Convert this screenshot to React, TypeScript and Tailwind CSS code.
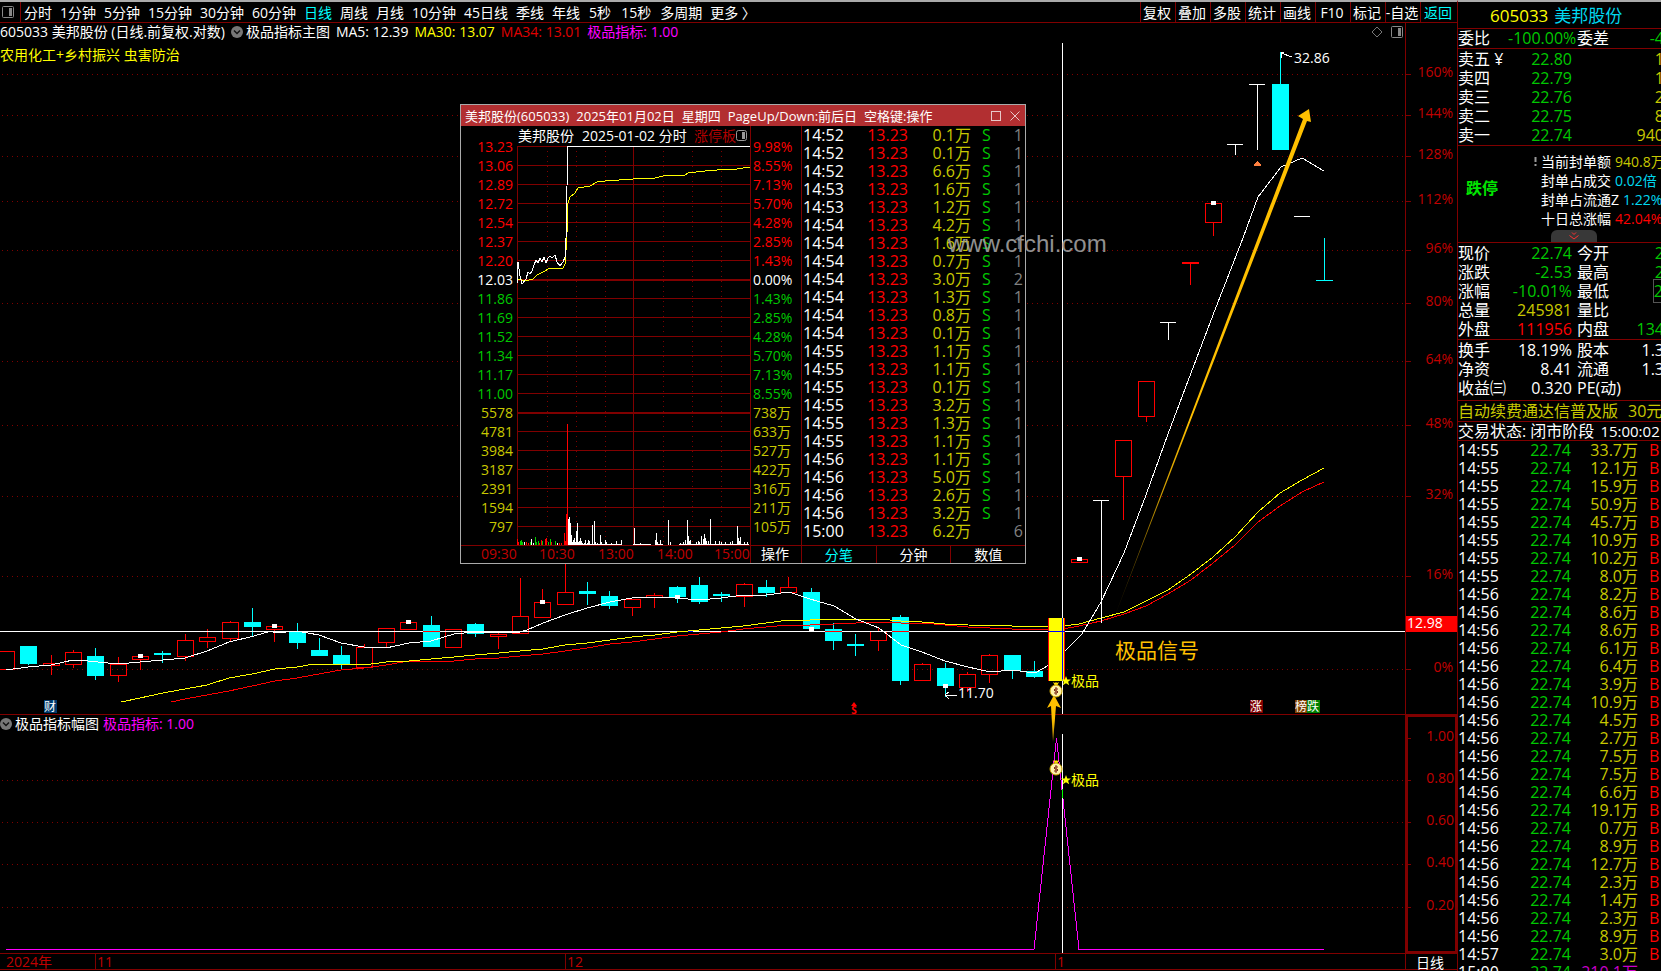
import clsx from "clsx";

const periods = [
  "分时",
  "1分钟",
  "5分钟",
  "15分钟",
  "30分钟",
  "60分钟",
  "日线",
  "周线",
  "月线",
  "10分钟",
  "45日线",
  "季线",
  "年线",
  "5秒",
  "15秒",
  "多周期",
  "更多 〉",
];

const tools = ["复权", "叠加", "多股", "统计", "画线", "F10", "标记", "-自选", "返回"];

type Kind = "up" | "down";
// kind, body top, body bottom, high, low, marked
type Candle = [Kind, number, number, number, number, boolean?];

const STEP = 22.35;
const xAt = (i: number) => Math.round(6 + STEP * i);

const candles: Candle[] = [
  ["up", 651, 669, 651, 669],
  ["down", 646, 664, 646, 665],
  ["up", 663, 665, 655, 675],
  ["up", 652, 664, 650, 668],
  ["down", 656, 676, 648, 680],
  ["up", 664, 675, 657, 682],
  ["up", 656, 659, 656, 670, true],
  ["down", 653, 655, 651, 663],
  ["up", 640, 656, 634, 661],
  ["up", 637, 641, 629, 648],
  ["up", 622, 638, 621, 642],
  ["down", 622, 627, 608, 636],
  ["up", 626, 629, 626, 642, true],
  ["down", 632, 643, 623, 649],
  ["down", 650, 656, 638, 656],
  ["down", 655, 664, 646, 670],
  ["up", 647, 667, 644, 667],
  ["up", 628, 642, 628, 648],
  ["up", 622, 629, 622, 629, true],
  ["down", 625, 647, 616, 647],
  ["up", 629, 647, 629, 647],
  ["down", 624, 634, 623, 637],
  ["up", 634, 636, 632, 649],
  ["up", 616, 633, 578, 633],
  ["up", 602, 617, 589, 617, true],
  ["up", 592, 604, 564, 604],
  ["down", 591, 594, 582, 605],
  ["down", 596, 606, 591, 609],
  ["up", 599, 607, 599, 616],
  ["up", 595, 597, 593, 608],
  ["down", 587, 597, 586, 603, true],
  ["down", 585, 602, 577, 604],
  ["down", 594, 596, 592, 602],
  ["up", 584, 596, 583, 607],
  ["down", 587, 593, 580, 597],
  ["up", 587, 592, 577, 592],
  ["down", 592, 629, 588, 629, true],
  ["down", 629, 641, 623, 650],
  ["down", 644, 646, 634, 656],
  ["up", 631, 640, 628, 651],
  ["down", 617, 681, 615, 685],
  ["up", 664, 680, 663, 680],
  ["down", 668, 686, 663, 697, true],
  ["up", 674, 687, 672, 692],
  ["up", 655, 674, 654, 683],
  ["down", 655, 671, 655, 679],
  ["down", 671, 677, 661, 678],
];

const ma5 =
  "6,670 28,667 51,665 73,660 88,661 118,664 140,662 163,660 185,658 207,651 229,642 250,637 268,632 275,631 297,631 319,635 341,643 364,647 386,648 409,643 431,641 454,634 475,632 499,633 520,632 527,630 543,623 565,615 587,608 610,602 632,598 655,597 677,598 699,600 721,598 743,595 766,595 789,592 810,599 834,606 856,619 879,628 901,645 922,652 945,661 968,667 990,672 1012,670 1035,673 1049,665 1065,651 1082,634 1101,602 1124,553 1146,495 1168,434 1191,373 1213,315 1236,256 1243,238 1258,197 1281,167 1302,158 1324,171";
const ma30 =
  "121,702 140,698 163,693 185,689 207,685 229,678 252,674 275,669 297,667 314,664 341,664 364,665 386,662 409,661 431,659 454,657 475,655 499,653 520,651 543,649 565,645 587,643 610,640 632,637 655,635 677,632 699,630 721,628 743,626 766,623 789,620 810,620 834,619 879,619 901,621 922,622 945,624 968,625 1012,626 1063,626 1079,624 1101,618 1124,612 1146,601 1168,590 1191,574 1213,557 1235,537 1258,512 1280,493 1302,480 1324,468";
const ma34 =
  "171,702 185,699 207,695 229,691 252,686 275,681 297,678 319,674 341,670 364,668 386,665 409,661 454,661 475,659 499,658 520,656 543,654 565,651 587,648 610,644 632,642 655,639 677,636 699,634 721,632 743,629 766,627 789,625 810,625 834,624 856,623 879,622 901,623 922,623 945,625 968,627 990,628 1012,629 1063,629 1079,626 1101,621 1124,614 1146,606 1168,594 1191,580 1213,563 1235,545 1258,522 1280,506 1302,492 1324,482";

const percentAxis: [string, number][] = [
  ["160%", 74],
  ["144%", 115],
  ["128%", 156],
  ["112%", 201],
  ["96%", 250],
  ["80%", 303],
  ["64%", 361],
  ["48%", 425],
  ["32%", 496],
  ["16%", 576],
  ["0%", 669],
];

const indicatorAxis: [string, number][] = [
  ["1.00", 738],
  ["0.80", 780],
  ["0.60", 822],
  ["0.40", 864],
  ["0.20", 907],
];

const priceLabels = [
  ["13.23", "9.98%"],
  ["13.06", "8.55%"],
  ["12.89", "7.13%"],
  ["12.72", "5.70%"],
  ["12.54", "4.28%"],
  ["12.37", "2.85%"],
  ["12.20", "1.43%"],
  ["12.03", "0.00%"],
  ["11.86", "1.43%"],
  ["11.69", "2.85%"],
  ["11.52", "4.28%"],
  ["11.34", "5.70%"],
  ["11.17", "7.13%"],
  ["11.00", "8.55%"],
  ["5578", "738万"],
  ["4781", "633万"],
  ["3984", "527万"],
  ["3187", "422万"],
  ["2391", "316万"],
  ["1594", "211万"],
  ["797", "105万"],
];

const dayTicks = [
  ["14:52", "0.1万", "1"],
  ["14:52", "0.1万", "1"],
  ["14:52", "6.6万", "1"],
  ["14:53", "1.6万", "1"],
  ["14:53", "1.2万", "1"],
  ["14:54", "4.2万", "1"],
  ["14:54", "1.6万", "1"],
  ["14:54", "0.7万", "1"],
  ["14:54", "3.0万", "2"],
  ["14:54", "1.3万", "1"],
  ["14:54", "0.8万", "1"],
  ["14:54", "0.1万", "1"],
  ["14:55", "1.1万", "1"],
  ["14:55", "1.1万", "1"],
  ["14:55", "0.1万", "1"],
  ["14:55", "3.2万", "1"],
  ["14:55", "1.3万", "1"],
  ["14:55", "1.1万", "1"],
  ["14:56", "1.1万", "1"],
  ["14:56", "5.0万", "1"],
  ["14:56", "2.6万", "1"],
  ["14:56", "3.2万", "1"],
  ["15:00", "6.2万", "6"],
];

const liveTicks = [
  ["14:55", "33.7万"],
  ["14:55", "12.1万"],
  ["14:55", "15.9万"],
  ["14:55", "50.9万"],
  ["14:55", "45.7万"],
  ["14:55", "10.9万"],
  ["14:55", "10.2万"],
  ["14:55", "8.0万"],
  ["14:56", "8.2万"],
  ["14:56", "8.6万"],
  ["14:56", "8.6万"],
  ["14:56", "6.1万"],
  ["14:56", "6.4万"],
  ["14:56", "3.9万"],
  ["14:56", "10.9万"],
  ["14:56", "4.5万"],
  ["14:56", "2.7万"],
  ["14:56", "7.5万"],
  ["14:56", "7.5万"],
  ["14:56", "6.6万"],
  ["14:56", "19.1万"],
  ["14:56", "0.7万"],
  ["14:56", "8.9万"],
  ["14:56", "12.7万"],
  ["14:56", "2.3万"],
  ["14:56", "1.4万"],
  ["14:56", "2.3万"],
  ["14:56", "8.9万"],
  ["14:57", "3.0万"],
  ["15:00", "210.1万"],
];

// x, height, colour of the per-minute volume bars
const volumes: [number, number, string][] = [
  [57, 6, "#f00"], [58, 3, "#f00"], [60, 4, "#0c0"], [61, 5, "#0c0"], [62, 3, "#0c0"], [64, 3, "#fff"],
  [66, 3, "#f00"], [68, 2, "#f00"], [70, 3, "#0c0"], [71, 6, "#fff"], [73, 2, "#fff"], [75, 8, "#0c0"],
  [76, 3, "#0c0"], [78, 4, "#0c0"], [79, 2, "#f00"], [81, 5, "#f00"], [82, 4, "#0c0"], [85, 6, "#f00"],
  [86, 7, "#f00"], [88, 3, "#0c0"], [90, 6, "#0c0"], [91, 3, "#f00"], [95, 4, "#0c0"], [97, 2, "#fff"],
  [99, 2, "#f00"], [101, 2, "#f00"], [104, 12, "#f00"], [105, 4, "#f00"], [106, 31, "#f00"],
  [107, 121, "#f00"], [108, 26, "#fff"], [109, 28, "#fff"], [110, 22, "#fff"], [111, 10, "#fff"],
  [112, 3, "#fff"], [113, 5, "#fff"], [114, 7, "#fff"], [115, 3, "#fff"], [116, 14, "#fff"],
  [117, 22, "#fff"], [118, 3, "#fff"], [119, 4, "#fff"], [120, 7, "#fff"], [121, 4, "#fff"],
  [122, 2, "#fff"], [124, 2, "#fff"], [125, 5, "#fff"], [127, 2, "#fff"], [128, 5, "#fff"],
  [129, 4, "#fff"], [132, 20, "#fff"], [134, 24, "#fff"], [135, 3, "#fff"], [137, 2, "#fff"],
  [140, 10, "#fff"], [141, 3, "#fff"], [145, 5, "#fff"], [146, 3, "#fff"], [151, 2, "#fff"],
  [156, 4, "#fff"], [161, 5, "#fff"], [174, 17, "#fff"], [180, 2, "#fff"], [195, 5, "#fff"],
  [196, 12, "#fff"], [197, 3, "#fff"], [200, 5, "#fff"], [208, 25, "#fff"], [210, 3, "#fff"],
  [220, 2, "#fff"], [223, 3, "#fff"], [225, 5, "#fff"], [227, 25, "#fff"], [228, 9, "#fff"],
  [229, 4, "#fff"], [230, 5, "#fff"], [236, 3, "#fff"], [238, 4, "#fff"], [239, 3, "#fff"],
  [241, 9, "#fff"], [243, 6, "#fff"], [244, 11, "#fff"], [245, 7, "#fff"], [246, 4, "#fff"],
  [248, 4, "#fff"], [250, 26, "#fff"], [255, 4, "#fff"], [259, 4, "#fff"], [261, 3, "#fff"],
  [265, 3, "#fff"], [270, 3, "#fff"], [272, 4, "#fff"], [277, 19, "#fff"], [278, 7, "#fff"],
  [279, 4, "#fff"], [280, 8, "#fff"], [284, 3, "#fff"], [287, 3, "#fff"],
];

const PaneIcon = () => (
  <svg width="12" height="12" viewBox="0 0 12 12" className="shrink-0">
    <rect x="0.5" y="0.5" width="11" height="11" rx="1" fill="none" stroke="#888" />
    <rect x="7" y="2" width="3" height="8" fill="#888" />
  </svg>
);

const ChevronIcon = () => (
  <svg width="12" height="12" viewBox="0 0 12 12" className="shrink-0">
    <circle cx="6" cy="6" r="6" fill="#777" />
    <path d="M3 4.5 6 7.5 9 4.5" fill="none" stroke="#111" strokeWidth="1.5" />
  </svg>
);

const Toolbar = () => (
  <header className="flex h-[23px] shrink-0 items-stretch border-b border-b-[#800000] border-t-2 border-t-[#aaa] text-sm leading-5">
    <div className="flex w-[21px] shrink-0 items-center border-r border-[#800000] pl-0.5">
      <PaneIcon />
    </div>
    <nav className="flex flex-1 items-center gap-2 overflow-hidden pl-[3px] pt-px">
      {periods.map((el) => (
        <button
          key={el}
          className={clsx(
            "shrink-0 cursor-pointer",
            el === "日线" && "text-[#00ffff]",
            el.endsWith("秒") && "px-px",
          )}
        >
          {el}
        </button>
      ))}
    </nav>
    <div className="flex shrink-0">
      {tools.map((el) => (
        <button
          key={el}
          className={clsx(
            "flex cursor-pointer items-center justify-center whitespace-nowrap border-l border-[#800000] pr-0.5 pt-px",
            el === "返回" ? "w-[37px] text-[#00ffff]" : "w-[35px]",
          )}
        >
          {el}
        </button>
      ))}
    </div>
  </header>
);

const MoneyBag = ({ x, y }: { x: number; y: number }) => (
  <g>
    <path d={`M${x - 3} ${y} l2 1 1 -1 1 1 2 -1 -2 4 h-2 Z`} fill="#ffe000" />
    <ellipse cx={x} cy={y + 9} rx="6" ry="6" fill="#fff2a8" stroke="#c9a400" />
    <path
      d={`M${x + 2} ${y + 7} h-3 q-2 1 0 2 h2 q2 1 0 2 h-3 M${x} ${y + 5} v8`}
      fill="none"
      stroke="#7a2a1a"
    />
  </g>
);

const Signal = ({ y }: { y: number }) => (
  <g fill="#ffff00">
    <path
      transform={`translate(1066 ${y})`}
      d="M0 -5 1.3 -1.6 5 -1.5 2.1 0.7 3.2 4.3 0 2.2 -3.2 4.3 -2.1 0.7 -5 -1.5 -1.3 -1.6Z"
    />
    <text x="1071" y={y + 5} fontSize="14">
      极品
    </text>
  </g>
);

const Badge = ({ x, fill, label }: { x: number; fill: string; label: string }) => (
  <g>
    <rect x={x} y="700" width="13" height="13" fill={fill} />
    <text x={x + 6} y="711" fontSize="12" textAnchor="middle" fill="#fff">
      {label}
    </text>
  </g>
);

const CandleShape = ({ i, candle }: { i: number; candle: Candle }) => {
  const [kind, top, bottom, high, low, marked] = candle;
  const x = xAt(i);
  const up = kind === "up";
  const color = up ? "#ff0000" : "#00ffff";
  return (
    <g>
      {high < top && <rect x={x} y={high} width="1" height={top - high} fill={color} />}
      {low > bottom && <rect x={x} y={bottom} width="1" height={low - bottom} fill={color} />}
      {up ? (
        <rect x={x - 7.5} y={top + 0.5} width="16" height={bottom - top} fill="none" stroke={color} />
      ) : (
        <rect x={x - 8} y={top} width="17" height={bottom - top} fill={color} />
      )}
      {marked && <rect x={x - 2} y={top + (up ? -2 : bottom - top - 2)} width="5" height="4" fill="#fff" />}
    </g>
  );
};

const MainChart = () => (
  <svg viewBox="0 23 1457 692" className="block w-full overflow-visible">
    <defs>
      <linearGradient id="rise" x1="0" y1="1" x2="0" y2="0">
        <stop offset="0" stopColor="#ffc000" stopOpacity="0" />
        <stop offset="0.25" stopColor="#ffc000" stopOpacity="0.8" />
        <stop offset="0.4" stopColor="#ffc000" />
      </linearGradient>
      <linearGradient id="lift" x1="0" y1="1" x2="0" y2="0">
        <stop offset="0" stopColor="#ffc000" stopOpacity="0.2" />
        <stop offset="0.5" stopColor="#ffc000" />
      </linearGradient>
    </defs>

    <g shapeRendering="crispEdges" fill="none">
      {percentAxis.map(([label, y]) => (
        <g key={label} stroke="#800000">
          <path d={`M2 ${y + 0.5}H1405`} strokeDasharray="1 4" />
          <path d={`M1405 ${y + 0.5}H1411`} />
        </g>
      ))}
      <path d="M1405.5 23V715M0 714.5H1457" stroke="#800000" />

      {candles.map((candle, i) => (
        <CandleShape key={i} i={i} candle={candle} />
      ))}

      <path d="M0 631.5H1405" stroke="#fff" />
      <path d="M273 631.5H286" stroke="#fff" strokeWidth="2" />
      <path d="M682 631.5H693" stroke="#0000ff" />
      <path d="M423 631.5H440M825 631.5H842M892 631.5H909" stroke="#ff0000" />

      <polyline points={ma34} stroke="#ff0000" />
      <polyline points={ma30} stroke="#ffff00" />
      <polyline points={ma5} stroke="#fff" />

      <rect x="1048" y="618" width="17" height="63" fill="#ffff00" />
      <path d="M1048.5 618V681M1064.5 618V681" stroke="#ff0000" />
      <path d="M1062.5 43V618M1062.5 681V714" stroke="#fff" />
      <path d="M1062.5 618V681M1048 631.5H1065" stroke="#0000ff" />

      <rect x="1071.5" y="559.5" width="16" height="3" stroke="#ff0000" />
      <rect x="1077" y="557" width="5" height="4" fill="#fff" />
      <path d="M1093 500.5H1109M1101.5 500V623" stroke="#fff" />
      <path d="M1115.5 440.5H1131.5V476.5H1115.5ZM1123.5 477V520" stroke="#ff0000" />
      <path d="M1138.5 381.5H1154.5V416.5H1138.5ZM1146.5 417V422" stroke="#ff0000" />
      <path d="M1160 322.5H1176M1168.5 322V340" stroke="#fff" />
      <path d="M1190.5 263V285" stroke="#ff0000" />
      <path d="M1182 263H1199" stroke="#ff0000" strokeWidth="2" />
      <path d="M1205.5 203.5H1221.5V222.5H1205.5ZM1213.5 223V236" stroke="#ff0000" />
      <rect x="1211" y="201" width="5" height="4" fill="#fff" />
      <path d="M1227 144.5H1243M1235.5 144V155" stroke="#fff" />
      <path d="M1249 84.5H1265M1257.5 84V150" stroke="#fff" />
      <path d="M1272 84H1289V150H1272ZM1280 52H1281V84H1280Z" fill="#00ffff" />
      <path d="M1294 216.5H1310" stroke="#fff" />
      <path d="M1316 280.5H1333M1324.5 238V280" stroke="#00ffff" />
      <path d="M1281 58V52.5H1284M1281 53L1292 57M945 695.5H957M945 695L949 692M945 695L949 699" stroke="#fff" />
      <path d="M1254 166V164L1257 161 1261 164V166Z" fill="#ff8040" />
    </g>

    <path d="M1111 626 1303 119 1298 116 1309 109 1311 122 1307 121Z" fill="url(#rise)" />
    <path d="M1053 742 1051 706 1047 708 1054 695 1061 708 1056 706Z" fill="url(#lift)" />
    <MoneyBag x={1056} y={682} />
    <Signal y={681} />

    <text x="1294" y="63" fontSize="14" fill="#fff">32.86</text>
    <text x="958" y="698" fontSize="14" fill="#fff">11.70</text>
    <text x="1115" y="658" fontSize="21" fill="#ffc000">极品信号</text>
    <path d="M851 706 854 702 857 706Z" fill="#ff0000" />
    <text x="854" y="714" fontSize="10" fontWeight="700" textAnchor="middle" fill="#ff0000">S</text>

    <Badge x={44} fill="#003a6e" label="财" />
    <Badge x={1250} fill="#800000" label="涨" />
    <Badge x={1295} fill="#804000" label="榜" />
    <Badge x={1307} fill="#008000" label="跌" />

    {percentAxis.map(([label, y]) => (
      <text key={label} x="1453" y={y + 3} fontSize="14" textAnchor="end" fill="#c00000">
        {label}
      </text>
    ))}
    <rect x="1406" y="616" width="51" height="16" fill="#ff0000" />
    <text x="1407" y="628" fontSize="14" fill="#fff">12.98</text>
  </svg>
);

const IndicatorChart = () => (
  <svg viewBox="0 715 1457 256" className="block w-full">
    <g shapeRendering="crispEdges" fill="none" stroke="#800000">
      {indicatorAxis.map(([label, y], i) => (
        <g key={label}>
          {i > 0 && <path d={`M2 ${y + 0.5}H1405`} strokeDasharray="1 4" />}
          <path d={`M1405 ${y + 0.5}H1411M1405 ${y - 20.5}H1408`} />
        </g>
      ))}
      <path d="M1405.5 715V969M0 953.5H1457M0 969.5H1457" />
      <path d="M1407 716H1456V952H1407Z" strokeWidth="2" />
      <path d="M95.5 953V969M565.5 953V969M1055.5 953V969" />
      <polyline points="6,949.5 1034,949.5 1056.5,738 1079,949.5 1324,949.5" stroke="#ff00ff" />
      <path d="M1062.5 734V953" stroke="#fff" />
      <path d="M1062.5 789V798" stroke="#00ff00" />
    </g>
    <MoneyBag x={1056} y={760} />
    <Signal y={780} />
    <path d="M1053 742 1052 715H1055Z" fill="#ffc000" fillOpacity="0.6" />
    {indicatorAxis.map(([label, y]) => (
      <text key={label} x="1454" y={y + 3} fontSize="14" textAnchor="end" fill="#c00000">
        {label}
      </text>
    ))}
    <g fontSize="14" fill="#c00000">
      <text x="6" y="967">2024年</text>
      <text x="97" y="967">11</text>
      <text x="567" y="967">12</text>
      <text x="1057" y="967">1</text>
      <text x="1430" y="968" textAnchor="middle" fill="#fff">日线</text>
    </g>
  </svg>
);

const labelColor = (i: number) => {
  if (i < 7) return "#ff0000";
  if (i === 7) return "#ffffff";
  return i < 14 ? "#00c800" : "#c8c800";
};

const IntradayChart = () => (
  <svg width="341" height="437" viewBox="0 0 341 437" className="block shrink-0" fontSize="14">
    <g shapeRendering="crispEdges" fill="none" stroke="#800000">
      {priceLabels.map((_, i) => (
        <path key={i} d={`M56 ${20.5 + 19 * i}H290`} strokeWidth={i === 7 || i === 14 ? 2 : 1} />
      ))}
      <path d="M56.5 20V419M172.5 20V419M289.5 0V437M340.5 0V437M0 419.5H341" />
      <path d="M86.5 20V419M115.5 20V419M144.5 20V419M202.5 20V419M231.5 20V419M260.5 20V419" strokeDasharray="1 4" />
      {volumes.map(([x, h, fill]) => (
        <rect key={x} x={x - 1} y={419 - h} width="1" height={h} fill={fill} stroke="none" />
      ))}
      <path d="M112 418.5H160M172 418.5H190M196 418.5H202M218 418.5H288" stroke="#fff" />
      <polyline
        points="56,154 59,153 62,155 68,154 72,153 76,149 82,146 89,142 102,142 104,138 105,124 106,107 107,77 109,71 114,67 117,62 129,60 136,56 144,55 172,53 194,52 202,50 224,49 227,47 244,45 256,44 276,43 289,41"
        stroke="#ffff00"
      />
      <polyline
        points="56,158 57,136 59,150 61,158 65,153 67,146 69,148 71,145 73,139 75,134 77,137 79,132 81,136 83,131 85,137 87,132 89,130 91,132 94,129 96,136 99,140 102,136 104,131 105,112 106,60 107,20.5 289,20.5"
        stroke="#fff"
      />
    </g>
    {priceLabels.map(([left, right], i) => (
      <g key={i} fill={labelColor(i)}>
        <text x="52" y={26 + 19 * i} textAnchor="end">{left}</text>
        <text x="292" y={26 + 19 * i}>{right}</text>
      </g>
    ))}
    <text x="57" y="15" fill="#fff">美邦股份</text>
    <text x="121" y="15" fill="#fff">2025-01-02 分时</text>
    <text x="233" y="15" fill="#b00000">涨停板</text>
    <rect x="275.5" y="4.5" width="10" height="10" rx="2" fill="#000" stroke="#999" />
    <rect x="281" y="6" width="3" height="7" fill="#999" />
    <g fill="#c00000">
      <text x="20" y="433">09:30</text>
      <text x="78" y="433">10:30</text>
      <text x="137" y="433">13:00</text>
      <text x="196" y="433">14:00</text>
      <text x="253" y="433">15:00</text>
    </g>
    <text x="300" y="433" fill="#fff">操作</text>
  </svg>
);

const DayWindow = () => (
  <section className="absolute left-[460px] top-[81px] flex w-[566px] flex-col border border-[#aaa] bg-black">
    <div className="flex h-[21px] items-center justify-between bg-[#b22f31] px-1 text-[13px] leading-5">
      <h2 className="flex gap-[7px] whitespace-nowrap">
        <span>美邦股份(605033)</span>
        <span>2025年01月02日</span>
        <span>星期四</span>
        <span>PageUp/Down:前后日</span>
        <span>空格键:操作</span>
      </h2>
      <div className="flex items-center gap-2">
        <button aria-label="最大化" className="size-[10px] border border-[#e8c8c8]" />
        <button aria-label="关闭" className="cursor-pointer">
          <svg width="12" height="12" viewBox="0 0 12 12">
            <path d="M1.5 1.5 10.5 10.5M10.5 1.5 1.5 10.5" stroke="#e8c8c8" />
          </svg>
        </button>
      </div>
    </div>
    <div className="flex">
      <IntradayChart />
      <div className="flex flex-1 flex-col justify-between">
        <table className="w-full table-fixed text-base leading-[18px]">
          <tbody>
            {dayTicks.map(([time, volume, count], i) => (
              <tr key={i} className="h-[18px]">
                <td className="w-[50px] p-0 pl-px">{time}</td>
                <td className="w-[56px] p-0 text-right text-[#ff0000]">13.23</td>
                <td className="w-[63px] p-0 text-right text-[#c8c800]">{volume}</td>
                <td className="p-0 pl-[11px] text-[#00c800]">{i < 22 ? "S" : ""}</td>
                <td className="w-5 p-0 pr-0.5 text-right text-[#808080]">{count}</td>
              </tr>
            ))}
          </tbody>
        </table>
        <div className="flex h-[18px] border-t border-[#800000] text-sm leading-[18px]">
          <button className="flex-1 text-[#00ffff]">分笔</button>
          <button className="flex-1 border-l border-[#800000]">分钟</button>
          <button className="flex-1 border-l border-[#800000]">数值</button>
        </div>
      </div>
    </div>
  </section>
);

interface QuoteProps {
  label: string;
  value: string;
  color?: string;
  label2?: string;
  value2?: string;
  color2?: string;
  boxed?: boolean;
}

const Quote = ({ label, value, color, label2, value2, color2, boxed }: QuoteProps) => (
  <div className="flex h-[19px] items-center whitespace-nowrap">
    <span className="w-[50px]">{label}</span>
    <span className={clsx("w-[64px] text-right", color)}>{value}</span>
    <span className="w-[54px] pl-[5px]">{label2}</span>
    <span className={clsx("flex-1 text-right", color2)}>
      <span className={clsx(boxed && "border border-[#555]")}>{value2}</span>
    </span>
  </div>
);

const green = "text-[#00c800]";
const yellow = "text-[#c8c800]";
const red = "text-[#ff0000]";

const QuotePanel = () => (
  <aside className="w-[204px] shrink-0 overflow-hidden border-l border-[#800000] border-t-2 border-t-[#aaa] text-base leading-[19px]">
    <div className="w-[206px] *:border-b *:border-[#800000]">
      <h1 className="flex h-[27px] items-center gap-1.5 text-[17px]">
        <span className="pl-8 text-[#ffff00]">605033</span>
        <span className="text-[#00d8f0]">美邦股份</span>
      </h1>
      <div className="h-5">
        <Quote label="委比" value="-100.00%" color={green} label2="委差" value2="-4" color2={green} />
      </div>
      <div className="h-[97px] pt-px">
        <Quote label="卖五 ¥" value="22.80" color={green} value2="1" color2={yellow} />
        <Quote label="卖四" value="22.79" color={green} value2="1" color2={yellow} />
        <Quote label="卖三" value="22.76" color={green} value2="2" color2={yellow} />
        <Quote label="卖二" value="22.75" color={green} value2="8" color2={yellow} />
        <Quote label="卖一" value="22.74" color={green} value2="940" color2={yellow} />
      </div>
      <div className="flex h-[97px] flex-col justify-between">
        <div className="flex items-center gap-9 whitespace-nowrap pl-2 pt-1.5">
          <strong className="shrink-0 pb-1 text-[#00e600]">跌停</strong>
          <div className="flex items-start gap-1 text-sm leading-[19px]">
            <svg width="3" height="19" viewBox="0 0 3 19">
              <path d="M1.500 5V10M1.500 12V14" stroke="#999" strokeWidth="2" />
            </svg>
            <dl className="flex flex-col *:flex *:gap-1">
              <div>
                <dt>当前封单额</dt>
                <dd className={yellow}>940.8万</dd>
              </div>
              <div>
                <dt>封单占成交</dt>
                <dd className="text-[#00d8f0]">0.02倍</dd>
              </div>
              <div>
                <dt>封单占流通Z</dt>
                <dd className="text-[#00d8f0]">1.22%</dd>
              </div>
              <div>
                <dt>十日总涨幅</dt>
                <dd className={red}>42.04%</dd>
              </div>
            </dl>
          </div>
        </div>
        <button
          aria-label="收起"
          className="ml-[93px] flex h-3 w-[46px] items-center justify-center rounded-t-md bg-[#383838]"
        >
          <svg width="10" height="8" viewBox="0 0 10 8" fill="none" stroke="#ff3030">
            <path d="M3 0.5 5 2.500 7 0.500M0.500 3.500 5 7 9.500 3.500" />
          </svg>
        </button>
      </div>
      <div className="h-[97px] pt-px">
        <Quote label="现价" value="22.74" color={green} label2="今开" value2="2" color2={green} />
        <Quote label="涨跌" value="-2.53" color={green} label2="最高" value2="2" color2={green} />
        <Quote label="涨幅" value="-10.01%" color={green} label2="最低" value2="2" color2={green} boxed />
        <Quote label="总量" value="245981" color={yellow} label2="量比" />
        <Quote label="外盘" value="111956" color={red} label2="内盘" value2="134" color2={green} />
      </div>
      <div className="h-[61px] pt-px">
        <Quote label="换手" value="18.19%" label2="股本" value2="1.3" />
        <Quote label="净资" value="8.41" label2="流通" value2="1.3" />
        <Quote label="收益㈢" value="0.320" label2="PE(动)" />
      </div>
      <p className="flex h-[21px] items-center gap-2.5 whitespace-nowrap text-[#c8c800]">
        <span>自动续费通达信普及版</span>
        <span>30元</span>
      </p>
      <p className="flex h-[19px] items-center gap-1.5 whitespace-nowrap">
        <span>交易状态: 闭市阶段</span>
        <span className="text-[15px]">15:00:02</span>
      </p>
    </div>
    <table className="w-[203px] table-fixed leading-[18px]">
      <tbody>
        {liveTicks.map(([time, volume], i) => {
          const last = i === liveTicks.length - 1;
          return (
            <tr key={i} className="h-[18px]">
              <td className="w-[50px] p-0">{time}</td>
              <td className="w-[63px] p-0 text-right text-[#00c800]">22.74</td>
              <td className={clsx("w-[67px] p-0 text-right", last ? "text-[#c800c8]" : "text-[#c8c800]")}>
                {volume}
              </td>
              <td className="p-0 pl-[11px] text-[#ff0000]">{last ? "" : "B"}</td>
            </tr>
          );
        })}
      </tbody>
    </table>
  </aside>
);

const App = () => {
  return (
    <div className="flex h-screen overflow-hidden bg-black font-['Open_Sans','Noto_Sans_CJK_SC',sans-serif] text-white">
      <main className="flex min-w-0 flex-1 flex-col">
        <Toolbar />
        <div className="relative">
          <MainChart />
          <div className="absolute left-0 top-0 whitespace-nowrap text-sm leading-[18px]">
            <div className="flex items-center gap-1.5">
              <span>605033 美邦股份 (日线.前复权.对数)</span>
              <div className="flex items-center gap-[3px]">
                <ChevronIcon />
                <span>极品指标主图</span>
              </div>
              <span>MA5: 12.39</span>
              <span className="text-[#ffff00]">MA30: 13.07</span>
              <span className="text-[#e00000]">MA34: 13.01</span>
              <span className="text-[#ff00ff]">极品指标: 1.00</span>
            </div>
            <p className="pt-[5px] text-[#ffff00]">农用化工+乡村振兴 虫害防治</p>
          </div>
          <div className="absolute right-[54px] top-[3px] flex items-center gap-2">
            <svg width="12" height="12" viewBox="0 0 12 12">
              <path d="M6 1 11 6 6 11 1 6Z" fill="none" stroke="#777" />
            </svg>
            <PaneIcon />
          </div>
          <DayWindow />
          <div className="absolute left-[948px] top-[205px] font-['Liberation_Sans',sans-serif] text-2xl text-[#a0a0a0] opacity-90">
            www.cfchi.com
          </div>
        </div>
        <div className="relative">
          <IndicatorChart />
          <div className="absolute left-0 top-0 flex items-center gap-[3px] whitespace-nowrap text-sm leading-[18px]">
            <ChevronIcon />
            <span>极品指标幅图</span>
            <span className="pl-px text-[#ff00ff]">极品指标: 1.00</span>
          </div>
        </div>
      </main>
      <QuotePanel />
    </div>
  );
};

export default App;
